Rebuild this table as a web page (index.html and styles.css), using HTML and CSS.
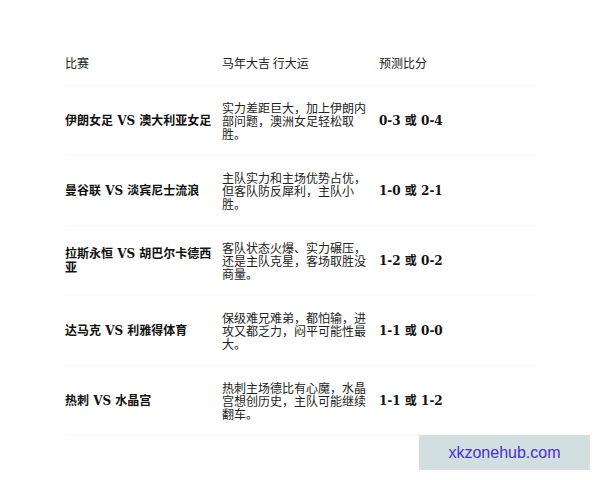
FILE: index.html
```html
<!DOCTYPE html>
<html lang="zh">
<head>
<meta charset="utf-8">
<title>预测比分</title>
<link rel="stylesheet" href="styles.css">
</head>
<body>
<table class="predict">
  <thead>
    <tr>
      <th class="c1">比赛</th>
      <th class="c2">马年大吉 行大运</th>
      <th class="c3">预测比分</th>
    </tr>
  </thead>
  <tbody>
    <tr>
      <td class="match">伊朗女足 VS 澳大利亚女足</td>
      <td class="desc">实力差距巨大，加上伊朗内部问题，澳洲女足轻松取胜。</td>
      <td class="score">0-3 或 0-4</td>
    </tr>
    <tr>
      <td class="match">曼谷联 VS 淡宾尼士流浪</td>
      <td class="desc">主队实力和主场优势占优，但客队防反犀利，主队小胜。</td>
      <td class="score">1-0 或 2-1</td>
    </tr>
    <tr>
      <td class="match">拉斯永恒 VS 胡巴尔卡德西亚</td>
      <td class="desc">客队状态火爆、实力碾压，还是主队克星，客场取胜没商量。</td>
      <td class="score">1-2 或 0-2</td>
    </tr>
    <tr>
      <td class="match">达马克 VS 利雅得体育</td>
      <td class="desc">保级难兄难弟，都怕输，进攻又都乏力，闷平可能性最大。</td>
      <td class="score">1-1 或 0-0</td>
    </tr>
    <tr>
      <td class="match">热刺 VS 水晶宫</td>
      <td class="desc">热刺主场德比有心魔，水晶宫想创历史，主队可能继续翻车。</td>
      <td class="score">1-1 或 1-2</td>
    </tr>
  </tbody>
</table>
<div class="watermark">xkzonehub.com</div>
</body>
</html>
```
FILE: styles.css
```css
html, body {
  margin: 0;
  padding: 0;
  background: #ffffff;
}

body {
  width: 600px;
  height: 480px;
  position: relative;
  overflow: hidden;
  font-family: "Noto Sans CJK SC", "DejaVu Sans", sans-serif;
  font-size: 12px;
  color: #222222;
}

.predict {
  border-collapse: collapse;
  margin: 40px 0 0 65px;
  table-layout: fixed;
  width: 465px;
}

.predict th,
.predict td {
  padding: 0 4px 0 0;
  text-align: left;
  vertical-align: middle;
  border-bottom: 1px solid #fafafa;
}

.predict th {
  height: 45px;
  font-weight: normal;
  line-height: 14px;
  color: #222222;
}

.predict td {
  height: 69px;
}

.c1 { width: 153px; }
.c2 { width: 153px; }
.c3 { width: 155px; }

.match {
  font-family: "DejaVu Serif", "Noto Sans CJK SC", serif;
  font-weight: bold;
  line-height: 14px;
  color: #111111;
}

.desc {
  line-height: 13px;
  color: #222222;
}

.score {
  font-family: "DejaVu Serif", "Noto Sans CJK SC", serif;
  font-weight: bold;
  line-height: 14px;
  color: #111111;
}

.watermark {
  position: absolute;
  left: 419px;
  top: 435px;
  width: 171px;
  height: 35px;
  background: #d2dfe0;
  color: #4a30d0;
  font-family: "Liberation Sans", Arial, sans-serif;
  font-size: 16px;
  display: flex;
  align-items: center;
  justify-content: center;
}
```
